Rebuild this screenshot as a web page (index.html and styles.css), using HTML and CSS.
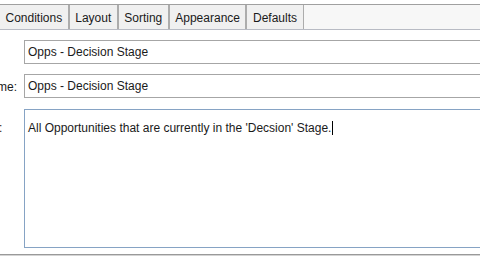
FILE: index.html
```html
<!DOCTYPE html>
<html>
<head>
<meta charset="utf-8">
<link rel="stylesheet" href="styles.css">
</head>
<body>
<div class="panel">
  <div class="tabstrip">
    <div class="tabs">
      <span class="tab">Conditions</span>
      <span class="tab">Layout</span>
      <span class="tab">Sorting</span>
      <span class="tab">Appearance</span>
      <span class="tab">Defaults</span>
    </div>
  </div>
  <div class="form">
    <div class="row">
      <label class="lbl">Name:</label>
      <div class="field input">Opps - Decision Stage</div>
    </div>
    <div class="row">
      <label class="lbl">Display Name:</label>
      <div class="field input">Opps - Decision Stage</div>
    </div>
    <div class="row tall">
      <label class="lbl lbl-top">Description:</label>
      <div class="field area">All Opportunities that are currently in the 'Decsion' Stage.<span class="caret"></span></div>
    </div>
  </div>
  <div class="bottomline"></div>
</div>
</body>
</html>
```

FILE: styles.css
```css
html, body {
  margin: 0;
  padding: 0;
  background: #ffffff;
}
body {
  width: 480px;
  height: 261px;
  overflow: hidden;
  font-family: "Liberation Sans", Arial, sans-serif;
  font-size: 12px;
  color: #1a1a1a;
}
.panel {
  padding-top: 4px;
}
.tabstrip {
  height: 24px;
  background: #f7f7f7;
  border-top: 1px solid #a0a0a0;
  border-bottom: 1px solid #b8bbc4;
  display: flex;
}
.tabs {
  display: flex;
  margin-left: -1px;
}
.tab {
  padding: 2px 5.5px 0;
  line-height: 22px;
  border-left: 1px solid #acacac;
  border-right: 1px solid #acacac;
  background: #f0f0f0;
  white-space: nowrap;
}
.form {
  padding-top: 10px;
  display: flex;
  flex-direction: column;
  gap: 10px;
}
.row {
  display: flex;
  align-items: center;
  margin-left: -61px;
}
.row.tall {
  align-items: flex-start;
  margin-top: 1px;
}
.lbl {
  width: 85px;
  flex: none;
  white-space: nowrap;
  padding-top: 2px;
}
.lbl-top {
  padding-top: 12px;
}
.field {
  flex: none;
  width: 600px;
  box-sizing: border-box;
  padding: 0 3px;
  white-space: nowrap;
}
.input {
  height: 24px;
  line-height: 22px;
  border: 1px solid #a6a6a6;
}
.area {
  height: 139px;
  border: 1px solid #86a3c4;
  padding-top: 11px;
  line-height: 14px;
}
.caret {
  display: inline-block;
  width: 1px;
  height: 14px;
  background: #000000;
  vertical-align: -3px;
  margin-left: 1px;
}
.bottomline {
  margin-top: 6px;
  height: 1px;
  background: #9a9a9a;
  border-bottom: 1px solid #d4d4d4;
}
```
